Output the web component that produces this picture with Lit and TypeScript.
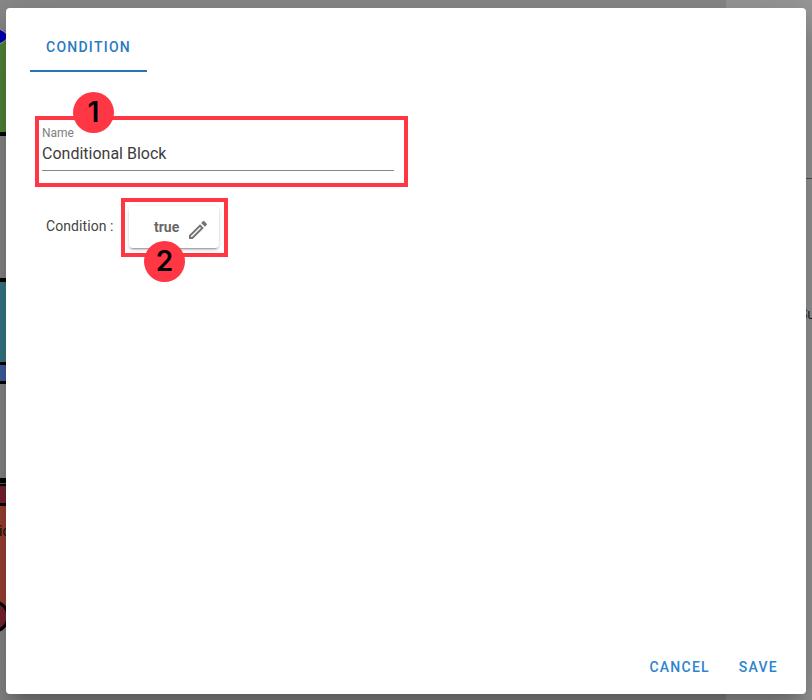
import { LitElement, html, css, svg } from "lit";
import { customElement, property } from "lit/decorators.js";

@customElement("step-marker")
class StepMarker extends LitElement {
  @property() label = "";
  static styles = css`
    :host {
      display: grid;
      place-items: center;
      width: 41px;
      height: 41px;
      border-radius: 50%;
      background: #ff3644;
      color: #000;
      font: 600 28px/41px Inter, "Noto Sans", sans-serif;
    }
  `;
  render() {
    return html`<span>${this.label}</span>`;
  }
}

@customElement("diagram-backdrop")
class DiagramBackdrop extends LitElement {
  static styles = css`
    :host, svg { display: block; width: 812px; height: 700px; }
    .label { font: 14px Roboto, sans-serif; fill: #101010; }
    .panel-label { font: 14px Roboto, sans-serif; fill: #222; }
  `;
  render() {
    const blocks = svg`
      <rect x="-60" y="40" width="90" height="93" fill="#548a38" />
      <rect x="-60" y="132" width="90" height="4" fill="#000" />
      <path d="M-4 28Q4 30 9 36.500Q4 43 -4 45z" fill="#0000b4" stroke="#aaa" />
      <rect x="-60" y="278" width="90" height="106" fill="#000" />
      <rect x="-60" y="282" width="90" height="80" fill="#357c88" />
      <rect x="-60" y="365" width="90" height="16" fill="#4161a2" />
      <rect x="-60" y="506" width="90" height="104" fill="#a04233" />
      <rect x="-60" y="478" width="90" height="28" fill="#000" />
      <rect x="-60" y="483" width="90" height="1" fill="#555" />
      <rect x="-60" y="486" width="90" height="17" fill="#7b2430" />
      <circle cx="-7" cy="616.500" r="15" fill="#7b2430" stroke="#000" stroke-width="3" />
      <text class="label" x="-1" y="536">ic</text>`;
    return html`<svg viewBox="0 0 812 700">
      <rect width="812" height="700" fill="#8a8a8a" />
      <rect x="726" width="86" height="700" fill="#999" />
      <path d="M726 178.500h86" stroke="#555" />
      ${blocks}
      <text class="panel-label" x="799" y="319">Su</text>
    </svg>`;
  }
}

@customElement("app-root")
class AppRoot extends LitElement {
  static styles = css`
    :host {
      display: block;
      position: relative;
      width: 812px;
      height: 700px;
      overflow: hidden;
      font-family: Roboto, sans-serif;
    }
    * { box-sizing: border-box; }
    .dialog {
      position: absolute;
      inset: 8px 6px 6px;
      display: flex;
      flex-direction: column;
      background: #fff;
      border-radius: 4px;
      box-shadow: 0 11px 15px -7px rgba(0, 0, 0, 0.2),
        0 24px 38px 3px rgba(0, 0, 0, 0.14), 0 9px 46px 8px rgba(0, 0, 0, 0.12);
    }
    .tabs { display: flex; padding: 16px 24px 0; }
    .tab {
      width: 117px;
      height: 48px;
      padding-bottom: 1px;
      border: 0;
      border-bottom: 2px solid #2874b8;
      background: none;
      color: #2a7bbf;
      font: 500 14px/45px Roboto, sans-serif;
      letter-spacing: 1.25px;
      text-align: center;
    }
    .content { flex: 1; padding: 44px 29px 0; }
    .callout { position: relative; border: 4px solid #ff3644; }
    .name-box { width: 373px; height: 71px; padding: 5px 10px 0 3px; }
    .name-label { font-size: 12px; line-height: 16px; color: #808080; }
    .name-value {
      height: 30px;
      border-bottom: 1px solid #888;
      color: #3c3c3c;
      font-size: 16px;
      line-height: 25px;
    }
    .marker { position: absolute; }
    .first { left: 34px; top: -28px; }
    .second { left: 19px; top: 39px; }
    .row { display: flex; margin: 11px 0 0 11px; }
    .row-label { width: 75px; font-size: 14px; line-height: 56px; color: #444; letter-spacing: 0.08px; }
    .value-box { width: 107px; height: 59px; padding: 4px; }
    .value {
      display: flex;
      width: 90px;
      height: 42px;
      padding: 0 11px 0 25px;
      gap: 7px;
      border-radius: 4px;
      box-shadow: 0 3px 1px -2px rgba(0, 0, 0, 0.2),
        0 2px 2px rgba(0, 0, 0, 0.14), 0 1px 5px rgba(0, 0, 0, 0.12);
      color: #686868;
      font-size: 14px;
      font-weight: 700;
      line-height: 42px;
    }
    .pencil { width: 24px; height: 24px; flex: none; margin: 12px 0 0 -0.5px; fill: #757575; }
    .actions { display: flex; justify-content: flex-end; gap: 29px; padding: 0 28px 18px; }
    .action {
      padding: 0;
      border: 0;
      background: none;
      color: #2d84cf;
      font: 500 14px/18px Roboto, sans-serif;
      letter-spacing: 1.25px;
    }
  `;
  render() {
    return html`
      <diagram-backdrop></diagram-backdrop>
      <section class="dialog" role="dialog">
        <nav class="tabs"><button class="tab">CONDITION</button></nav>
        <div class="content">
          <div class="callout name-box">
            <div class="name-label">Name</div>
            <div class="name-value">Conditional Block</div>
            <step-marker class="marker first" label="1"></step-marker>
          </div>
          <div class="row">
            <div class="row-label">Condition :</div>
            <div class="callout value-box">
              <div class="value">
                <span>true</span>
                <svg class="pencil" viewBox="0 0 24 24">
                  <path d="M14.060 9.020l.92.92L5.920 19H5v-.92l9.060-9.060M17.660 3c-.25 0-.51.1-.7.290l-1.830 1.830 3.750 3.750 1.830-1.830c.39-.39.39-1.020 0-1.410l-2.340-2.340c-.2-.2-.45-.29-.71-.29zm-3.600 3.190L3 17.250V21h3.750L17.810 9.940l-3.750-3.750z" />
                </svg>
              </div>
              <step-marker class="marker second" label="2"></step-marker>
            </div>
          </div>
        </div>
        <footer class="actions">
          <button class="action">CANCEL</button>
          <button class="action">SAVE</button>
        </footer>
      </section>
    `;
  }
}
